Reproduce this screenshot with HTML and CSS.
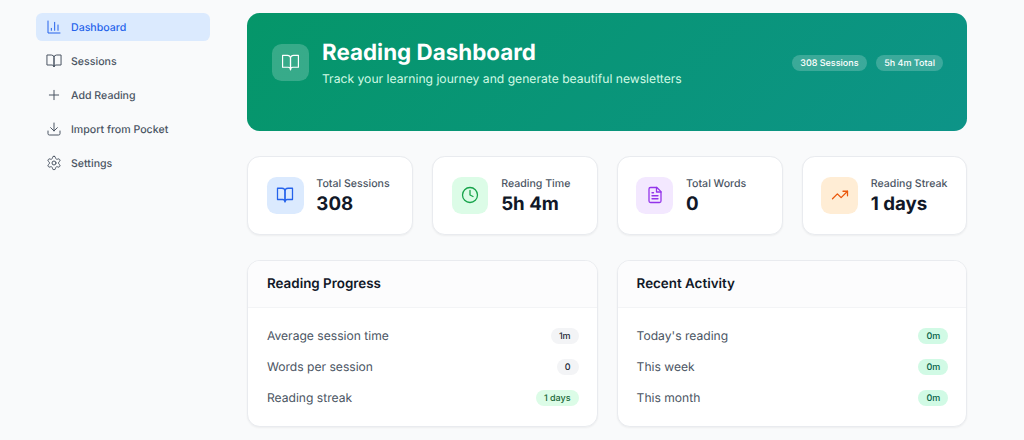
FILE: index.html
```html
<!DOCTYPE html>
<html lang="en">
<head>
    <meta charset="UTF-8">
    <meta name="viewport" content="width=device-width, initial-scale=1.0">
    <title>Reading Dashboard</title>
    <link rel="stylesheet" href="styles.css">
</head>
<body>

    <!-- Icon set -->
    <svg class="icon-defs" aria-hidden="true">
        <symbol id="i-chart" viewBox="0 0 24 24"><path d="M3 3v18h18"/><path d="M18 17V9"/><path d="M13 17V5"/><path d="M8 17v-3"/></symbol>
        <symbol id="i-book" viewBox="0 0 24 24"><path d="M2 3h6a4 4 0 0 1 4 4v14a3 3 0 0 0-3-3H2z"/><path d="M22 3h-6a4 4 0 0 0-4 4v14a3 3 0 0 1 3-3h7z"/></symbol>
        <symbol id="i-plus" viewBox="0 0 24 24"><path d="M5 12h14"/><path d="M12 5v14"/></symbol>
        <symbol id="i-download" viewBox="0 0 24 24"><path d="M21 15v4a2 2 0 0 1-2 2H5a2 2 0 0 1-2-2v-4"/><path d="M7 10l5 5 5-5"/><path d="M12 15V3"/></symbol>
        <symbol id="i-settings" viewBox="0 0 24 24"><path d="M12.22 2h-.44a2 2 0 0 0-2 2v.18a2 2 0 0 1-1 1.73l-.43.25a2 2 0 0 1-2 0l-.15-.08a2 2 0 0 0-2.73.73l-.22.38a2 2 0 0 0 .73 2.73l.15.1a2 2 0 0 1 1 1.72v.51a2 2 0 0 1-1 1.74l-.15.09a2 2 0 0 0-.73 2.73l.22.38a2 2 0 0 0 2.73.73l.15-.08a2 2 0 0 1 2 0l.43.25a2 2 0 0 1 1 1.73V20a2 2 0 0 0 2 2h.44a2 2 0 0 0 2-2v-.18a2 2 0 0 1 1-1.73l.43-.25a2 2 0 0 1 2 0l.15.08a2 2 0 0 0 2.73-.73l.22-.39a2 2 0 0 0-.73-2.73l-.15-.08a2 2 0 0 1-1-1.74v-.5a2 2 0 0 1 1-1.74l.15-.09a2 2 0 0 0 .73-2.73l-.22-.38a2 2 0 0 0-2.73-.73l-.15.08a2 2 0 0 1-2 0l-.43-.25a2 2 0 0 1-1-1.73V4a2 2 0 0 0-2-2z"/><circle cx="12" cy="12" r="3"/></symbol>
        <symbol id="i-clock" viewBox="0 0 24 24"><circle cx="12" cy="12" r="10"/><path d="M12 6v6l4 2"/></symbol>
        <symbol id="i-file" viewBox="0 0 24 24"><path d="M14.5 2H6a2 2 0 0 0-2 2v16a2 2 0 0 0 2 2h12a2 2 0 0 0 2-2V7.5L14.5 2z"/><path d="M14 2v6h6"/><path d="M16 13H8"/><path d="M16 17H8"/><path d="M10 9H8"/></symbol>
        <symbol id="i-trend" viewBox="0 0 24 24"><path d="M22 7l-8.5 8.5-5-5L2 17"/><path d="M16 7h6v6"/></symbol>
    </svg>

    <div class="layout">

        <!-- Sidebar -->
        <nav class="sidebar">
            <a href="#" class="nav-link active"><svg class="icon"><use href="#i-chart"/></svg>Dashboard</a>
            <a href="#" class="nav-link"><svg class="icon"><use href="#i-book"/></svg>Sessions</a>
            <a href="#" class="nav-link"><svg class="icon"><use href="#i-plus"/></svg>Add Reading</a>
            <a href="#" class="nav-link"><svg class="icon"><use href="#i-download"/></svg>Import from Pocket</a>
            <a href="#" class="nav-link"><svg class="icon"><use href="#i-settings"/></svg>Settings</a>
        </nav>

        <main class="content">

            <!-- Hero -->
            <section class="hero">
                <div class="hero-icon"><svg class="icon"><use href="#i-book"/></svg></div>
                <div class="hero-text">
                    <h1>Reading Dashboard</h1>
                    <p>Track your learning journey and generate beautiful newsletters</p>
                </div>
                <div class="hero-pills">
                    <span class="pill">308 Sessions</span>
                    <span class="pill">5h 4m Total</span>
                </div>
            </section>

            <!-- Stats -->
            <section class="stats">
                <div class="stat-card">
                    <div class="stat-icon blue"><svg class="icon"><use href="#i-book"/></svg></div>
                    <div class="stat-text"><p class="stat-label">Total Sessions</p><p class="stat-value">308</p></div>
                </div>
                <div class="stat-card">
                    <div class="stat-icon green"><svg class="icon"><use href="#i-clock"/></svg></div>
                    <div class="stat-text"><p class="stat-label">Reading Time</p><p class="stat-value">5h 4m</p></div>
                </div>
                <div class="stat-card">
                    <div class="stat-icon purple"><svg class="icon"><use href="#i-file"/></svg></div>
                    <div class="stat-text"><p class="stat-label">Total Words</p><p class="stat-value">0</p></div>
                </div>
                <div class="stat-card">
                    <div class="stat-icon orange"><svg class="icon"><use href="#i-trend"/></svg></div>
                    <div class="stat-text"><p class="stat-label">Reading Streak</p><p class="stat-value">1 days</p></div>
                </div>
            </section>

            <!-- Panels -->
            <section class="panels">
                <div class="panel">
                    <h2 class="panel-title">Reading Progress</h2>
                    <ul class="panel-rows">
                        <li><span>Average session time</span><span class="badge gray">1m</span></li>
                        <li><span>Words per session</span><span class="badge gray">0</span></li>
                        <li><span>Reading streak</span><span class="badge lime">1 days</span></li>
                    </ul>
                </div>
                <div class="panel">
                    <h2 class="panel-title">Recent Activity</h2>
                    <ul class="panel-rows">
                        <li><span>Today's reading</span><span class="badge mint">0m</span></li>
                        <li><span>This week</span><span class="badge mint">0m</span></li>
                        <li><span>This month</span><span class="badge mint">0m</span></li>
                    </ul>
                </div>
            </section>

        </main>
    </div>

</body>
</html>
```

FILE: styles.css
```css
* {
    box-sizing: border-box;
}

html, body {
    height: 100%;
}

body {
    margin: 0;
    background-color: #f9fafb;
    color: #111827;
    font-family: Inter, "Liberation Sans", sans-serif;
    text-rendering: geometricPrecision;
    overflow: hidden;
}

h1, h2, p, ul {
    margin: 0;
    padding: 0;
}

.icon-defs {
    display: none;
}

.icon {
    width: 16px;
    height: 16px;
    fill: none;
    stroke: currentColor;
    stroke-width: 2;
    stroke-linecap: round;
    stroke-linejoin: round;
    flex-shrink: 0;
}

.layout {
    display: flex;
    padding: 12.8px 56.6px 0 36.4px;
    gap: 37.4px;
}

/* Sidebar */
.sidebar {
    width: 173.6px;
    flex-shrink: 0;
    display: flex;
    flex-direction: column;
    gap: 6.2px;
}

.nav-link {
    display: flex;
    align-items: center;
    gap: 9px;
    height: 27.8px;
    padding: 1px 9.6px 0;
    border-radius: 6.4px;
    color: #4b5563;
    font-size: 10.6px;
    font-weight: 500;
    text-decoration: none;
}

.nav-link .icon {
    stroke-width: 1.5;
}

.nav-link.active {
    background-color: #dbeafe;
    color: #2563eb;
}

/* Hero */
.content {
    flex: 1;
    min-width: 0;
}

.hero {
    display: flex;
    align-items: flex-start;
    gap: 12.8px;
    height: 117.9px;
    padding: 25px 24.5px 24px 25px;
    border-radius: 12.8px;
    background: linear-gradient(135deg, #059669, #0d9488);
    color: white;
}

.hero-icon {
    width: 36.8px;
    height: 36.8px;
    margin-top: 6.2px;
    border-radius: 9.6px;
    background-color: rgba(255, 255, 255, 0.2);
    display: flex;
    align-items: center;
    justify-content: center;
}

.hero-icon .icon {
    width: 19px;
    height: 19px;
    stroke-width: 1.5;
}

.hero-text {
    flex: 1;
}

.hero-text h1 {
    font-size: 22.4px;
    font-weight: 700;
    line-height: 30px;
}

.hero-text p {
    margin-top: 2px;
    font-size: 12.15px;
    line-height: 18px;
    color: #d1fae5;
}

.hero-pills {
    display: flex;
    gap: 9.6px;
    margin-top: 17.4px;
}

.pill {
    height: 16px;
    padding: 0 8px;
    border-radius: 8px;
    background-color: rgba(255, 255, 255, 0.2);
    font-size: 9px;
    font-weight: 500;
    line-height: 17px;
}

/* Stat cards */
.stats {
    display: grid;
    grid-template-columns: repeat(4, 1fr);
    gap: 19.2px;
    margin-top: 25.6px;
}

.stat-card {
    display: flex;
    align-items: center;
    gap: 12.8px;
    height: 78.4px;
    padding: 0 18.4px;
    background-color: white;
    border: 1px solid #e9ebef;
    border-radius: 12.8px;
    box-shadow: 0 1px 2px rgba(0, 0, 0, 0.05);
}

.stat-icon {
    width: 36.8px;
    height: 36.8px;
    border-radius: 9.6px;
    display: flex;
    align-items: center;
    justify-content: center;
    flex-shrink: 0;
}

.stat-icon .icon {
    width: 18px;
    height: 18px;
    stroke-width: 1.7;
}

.stat-icon.blue { background-color: #dbeafe; color: #2563eb; }
.stat-icon.green { background-color: #dcfce7; color: #16a34a; }
.stat-icon.purple { background-color: #f3e8ff; color: #9333ea; }
.stat-icon.orange { background-color: #ffedd5; color: #ea580c; }

.stat-text {
    padding-top: 2px;
}

.stat-label {
    font-size: 10.6px;
    font-weight: 500;
    line-height: 14px;
    color: #4b5563;
}

.stat-value {
    font-size: 18.7px;
    font-weight: 700;
    line-height: 25px;
    color: #111827;
}

/* Panels */
.panels {
    display: grid;
    grid-template-columns: 1fr 1fr;
    gap: 19.2px;
    margin-top: 25.6px;
}

.panel {
    height: 166.6px;
    background-color: white;
    border: 1px solid #e9ebef;
    border-radius: 12.8px;
    box-shadow: 0 1px 2px rgba(0, 0, 0, 0.05);
    overflow: hidden;
}

.panel-title {
    height: 46.6px;
    padding: 0 18.6px;
    background-color: #fcfcfd;
    border-bottom: 1px solid #f3f4f6;
    font-size: 13.4px;
    font-weight: 600;
    line-height: 46px;
    color: #111827;
}

.panel-rows {
    list-style: none;
    padding: 12.4px 18.2px 0 18.6px;
}

.panel-rows li {
    display: flex;
    justify-content: space-between;
    align-items: center;
    height: 31px;
    font-size: 12.1px;
    color: #4b5563;
}

.badge {
    height: 16px;
    padding: 0 8px;
    border-radius: 8px;
    font-size: 9px;
    font-weight: 500;
    line-height: 18px;
}

.badge.gray { background-color: #f3f4f6; color: #1f2937; }
.badge.lime { background-color: #dcfce7; color: #166534; }
.badge.mint { background-color: #d1fae5; color: #065f46; }
```
